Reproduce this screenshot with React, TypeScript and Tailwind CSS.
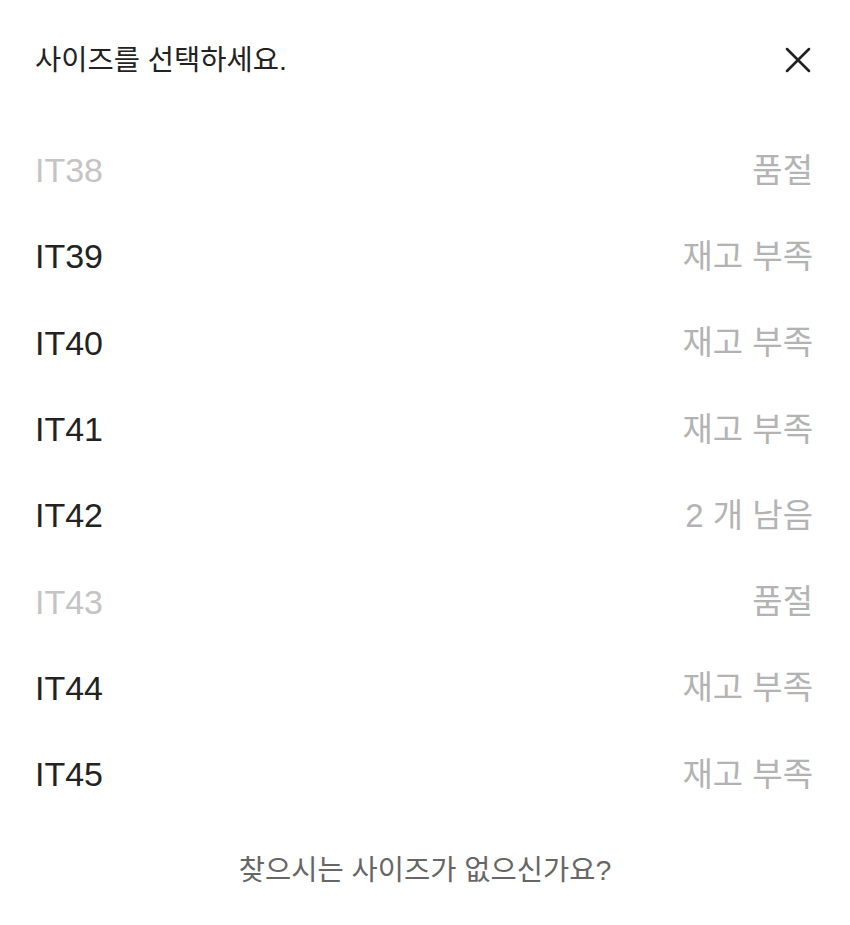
import { X } from 'lucide-react';

type SizeRow = {
  size: string;
  status: string;
  soldOut?: boolean;
};

const sizes: SizeRow[] = [
  { size: 'IT38', status: '품절', soldOut: true },
  { size: 'IT39', status: '재고 부족' },
  { size: 'IT40', status: '재고 부족' },
  { size: 'IT41', status: '재고 부족' },
  { size: 'IT42', status: '2 개 남음' },
  { size: 'IT43', status: '품절', soldOut: true },
  { size: 'IT44', status: '재고 부족' },
  { size: 'IT45', status: '재고 부족' },
];

export default function App() {
  return (
    <div
      className="min-h-screen w-full bg-white text-[#222]"
      style={{ fontFamily: '"Liberation Sans", "Noto Sans CJK KR", sans-serif' }}
    >
      {/* Header */}
      <div className="flex h-[120px] items-center justify-between pl-[35px] pr-[37px]">
        <h2 className="text-[28.5px] leading-none">사이즈를 선택하세요.</h2>
        <button className="-mr-[7px] flex h-11 w-11 items-center justify-center">
          <X className="h-11 w-11 text-[#222]" strokeWidth={1.4} />
        </button>
      </div>

      {/* Size list */}
      <ul className="pt-[7px] pl-[35px] pr-[37px]">
        {sizes.map((row) => (
          <li
            key={row.size}
            className="flex h-[86.3px] items-center justify-between"
          >
            <span
              className={
                row.soldOut
                  ? 'text-[34px] leading-none text-[#c4c4c4]'
                  : 'text-[34px] leading-none text-[#222]'
              }
            >
              {row.size}
            </span>
            <span className="text-[33px] leading-none text-[#b3b3b3]">
              {row.status}
            </span>
          </li>
        ))}
      </ul>

      {/* Footer link */}
      <div className="flex h-[106px] items-center justify-center">
        <span className="text-[28.5px] leading-none text-[#666]">
          찾으시는 사이즈가 없으신가요?
        </span>
      </div>
    </div>
  );
}
